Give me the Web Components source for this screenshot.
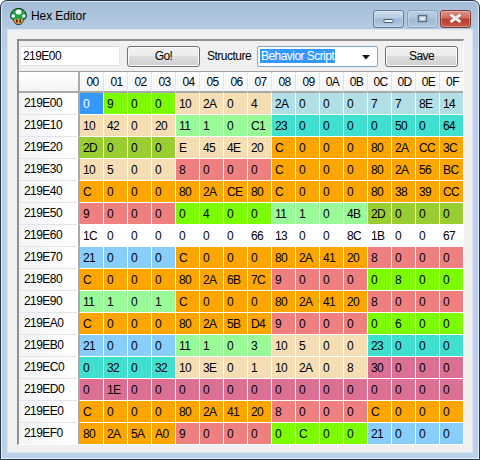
<!DOCTYPE html>
<html><head><meta charset="utf-8">
<style>
html,body{margin:0;padding:0;background:#fff;width:480px;height:460px;overflow:hidden}
body{font:12px "Liberation Sans",Arial,sans-serif;letter-spacing:-.55px;color:#000}
</style></head><body>
<hex-window><hex-panel><hex-toolbar></hex-toolbar><hex-grid></hex-grid></hex-panel></hex-window>
<template id="win-t"><style>
:host{display:flex;flex-direction:column;box-sizing:border-box;width:480px;height:460px;border:1px solid #2a3844;border-radius:7px 7px 0 0;background:linear-gradient(180deg,#a4bdd6 0,#b4cbe2 28px,#b9d1ea 60px);box-shadow:inset 0 0 0 1px rgba(255,255,255,.6);padding:0 7px 7px}
.title{height:29px;flex:none;display:flex;align-items:center}
.logo{margin:1px 4px 0 2px;flex:none}
.title span{font:12px "Liberation Sans",sans-serif;letter-spacing:-.1px;color:#000;margin-top:1px}
.caps{margin-left:auto;display:flex;gap:2px;align-self:flex-start;margin-top:9px;margin-right:1px}
.body{flex:1;background:#f0f0f0;padding:9px 8px 7px 9px;display:flex;min-height:0;box-shadow:0 0 0 1px #dce6f0}
</style>
<div class="title"><svg class="logo" width="17" height="17" viewBox="0 0 17 17"><path d="M8.5.5C4 .5.7 3.7.7 8c0 2.2 1.2 3.4 3 3.8.3 2.8 2 4.7 4.8 4.7s4.500-1.900 4.800-4.700c1.800-.4 3-1.600 3-3.800C16.300 3.700 13 .5 8.500.5Z" fill="#22a048" stroke="#0f2e18" stroke-width="1"/><ellipse cx="8.500" cy="4" rx="3" ry="2.500" fill="#f4fbf4"/><circle cx="3.200" cy="8" r="1.800" fill="#f4fbf4"/><circle cx="13.800" cy="8" r="1.800" fill="#f4fbf4"/><path d="M4 11.500c1.500-1 7.500-1 9 0 0 3-1.800 4.500-4.500 4.500S4 14.500 4 11.500Z" fill="#f0973a"/><rect x="6" y="11.500" width="1.500" height="3" fill="#2a1a08"/><rect x="9.500" y="11.500" width="1.500" height="3" fill="#2a1a08"/></svg><span>Hex Editor</span>
<div class="caps"><cap-btn kind="min"></cap-btn><cap-btn kind="max" style="margin-left:1px"></cap-btn><cap-btn kind="close"></cap-btn></div></div>
<div class="body"><slot></slot></div>
</template>
<script>
const byId=i=>document.getElementById(i);
class HexWindow extends HTMLElement{constructor(){super();this.attachShadow({mode:'open'}).appendChild(byId('win-t').content.cloneNode(true));}}
class CapBtn extends HTMLElement{constructor(){super();const k=this.getAttribute('kind');const s=this.attachShadow({mode:'open'});
const w=31;
const g=k==='min'?'<rect x="10" y="8.500" width="9" height="3" rx=".5" fill="#f4f7fa" stroke="#4a5c70"/>':k==='max'?'<rect x="10.500" y="4.500" width="8" height="6" fill="#cfdcea" stroke="#5a6c80" stroke-width="1.400"/><rect x="13" y="7" width="3" height="1.500" fill="#e8eef4"/>':'<path d="M9.500 3.500 L19.500 11 M19.500 3.500 L9.500 11" stroke="#5a2a26" stroke-width="4.200" opacity=".35"/><path d="M9.500 3.500 L19.500 11 M19.500 3.500 L9.500 11" stroke="#efe9e8" stroke-width="3"/>';
s.innerHTML=`<style>:host{display:block;width:${w}px;height:18px;box-sizing:border-box;border:1px solid ${k==='close'?'#7c3a36':k==='max'?'#8aa3bc':'#5f7a96'};border-radius:3px;background:${k==='close'?'linear-gradient(#dd9184 0,#cf6a5c 45%,#b93a2e 50%,#c65a4c 100%)':k==='max'?'linear-gradient(#bccfe2 0,#aec6de 45%,#a2bbd4 50%,#adc5dd 100%)':'linear-gradient(#d2e0ee 0,#b4cbe2 45%,#9cb8d4 50%,#b4cce3 100%)'};box-shadow:inset 0 0 0 1px rgba(255,255,255,.3)}svg{display:block}</style><svg width="29" height="16" viewBox="0 0 29 16">${g}</svg>`;}}
class HexPanel extends HTMLElement{constructor(){super();this.attachShadow({mode:'open'}).innerHTML=`<style>:host{display:flex;flex-direction:column;flex:none;box-sizing:border-box;border-left:2px solid #8f8f8f;border-top:2px solid #8f8f8f;border-right:1px solid #fff;border-bottom:1px solid #fff;background:#f0f0f0;width:447px;height:406px;overflow:hidden}</style><slot></slot>`;}}
class HexToolbar extends HTMLElement{constructor(){super();this.attachShadow({mode:'open'}).innerHTML=`<style>:host{display:flex;align-items:center;height:30px;box-sizing:border-box;padding:0 0 0 1px;flex:none;background:#f0f0f0}
.inp{width:100px;height:20px;box-sizing:border-box;background:#fff;border:1px solid #e4e5ea;border-top-color:#d8d9df;border-radius:2px;padding:0 2px;line-height:18px}
.lbl{margin:0 8px 0 7px;width:42px;white-space:nowrap;letter-spacing:-.5px}
.sel{width:121px;height:21px;box-sizing:border-box;background:#fff;border:1px solid #7fa9cf;border-radius:2px;display:flex;align-items:center;padding:0 2px;position:relative}
.sel b{font-weight:normal;background:#3399ff;color:#fff;padding:0 1px;line-height:14px;height:14px}
.sel svg{position:absolute;right:7px;top:8px}
.g{width:7px;flex:none}
</style><div class="inp">219E00</div><span class="g"></span><win-btn>Go!</win-btn><span class="lbl">Structure</span><div class="sel"><b>Behavior Script</b><svg width="8" height="5" viewBox="0 0 8 5"><path d="M0 0H8L4 4.500Z" fill="#111"/></svg></div><span class="g"></span><win-btn>Save</win-btn>`;}}
class WinBtn extends HTMLElement{constructor(){super();this.attachShadow({mode:'open'}).innerHTML=`<style>:host{display:flex;align-items:center;justify-content:center;width:73px;height:21px;flex:none;box-sizing:border-box;border:1px solid #707070;border-radius:3px;background:linear-gradient(#f2f2f2 0,#ebebeb 48%,#dddddd 50%,#cfcfcf 100%);box-shadow:inset 0 0 0 1px #fbfbfb}</style><slot></slot>`;}}
const C={s:'#3399ff',l:'#7cfc00',w:'#f5deb3',p:'#b0e0e6',g:'#98fb98',t:'#40e0d0',y:'#9acd32',c:'#f08080',o:'#ffa500',b:'#87cefa',v:'#db7093',n:'#ffffff'};
const rows=[
['219E00','s:0 l:9 l:0 l:0 w:10 w:2A w:0 w:4 p:2A p:0 p:0 p:0 p:7 p:7 p:8E p:14'],
['219E10','w:10 w:42 w:0 w:20 g:11 g:1 g:0 g:C1 t:23 t:0 t:0 t:0 t:0 t:50 t:0 t:64'],
['219E20','y:2D y:0 y:0 y:0 w:E w:45 w:4E w:20 o:C o:0 o:0 o:0 o:80 o:2A o:CC o:3C'],
['219E30','w:10 w:5 w:0 w:0 c:8 c:0 c:0 c:0 o:C o:0 o:0 o:0 o:80 o:2A o:56 o:BC'],
['219E40','o:C o:0 o:0 o:0 o:80 o:2A o:CE o:80 o:C o:0 o:0 o:0 o:80 o:38 o:39 o:CC'],
['219E50','c:9 c:0 c:0 c:0 l:0 l:4 l:0 l:0 g:11 g:1 g:0 g:4B y:2D y:0 y:0 y:0'],
['219E60','n:1C n:0 n:0 n:0 n:0 n:0 n:0 n:66 n:13 n:0 n:0 n:8C n:1B n:0 n:0 n:67'],
['219E70','b:21 b:0 b:0 b:0 o:C o:0 o:0 o:0 o:80 o:2A o:41 o:20 c:8 c:0 c:0 c:0'],
['219E80','o:C o:0 o:0 o:0 o:80 o:2A o:6B o:7C c:9 c:0 c:0 c:0 l:0 l:8 l:0 l:0'],
['219E90','g:11 g:1 g:0 g:1 o:C o:0 o:0 o:0 o:80 o:2A o:41 o:20 c:8 c:0 c:0 c:0'],
['219EA0','o:C o:0 o:0 o:0 o:80 o:2A o:5B o:D4 c:9 c:0 c:0 c:0 l:0 l:6 l:0 l:0'],
['219EB0','b:21 b:0 b:0 b:0 g:11 g:1 g:0 g:3 w:10 w:5 w:0 w:0 t:23 t:0 t:0 t:0'],
['219EC0','t:0 t:32 t:0 t:32 w:10 w:3E w:0 w:1 w:10 w:2A w:0 w:8 v:30 v:0 v:0 v:0'],
['219ED0','v:0 v:1E v:0 v:0 v:0 v:0 v:0 v:0 v:0 v:0 v:0 v:0 v:0 v:0 v:0 v:0'],
['219EE0','o:C o:0 o:0 o:0 o:80 o:2A o:41 o:20 c:8 c:0 c:0 c:0 o:C o:0 o:0 o:0'],
['219EF0','o:80 o:2A o:5A o:A0 c:9 c:0 c:0 c:0 l:0 l:C l:0 l:0 b:21 b:0 b:0 b:0']];
class HexGrid extends HTMLElement{constructor(){super();const s=this.attachShadow({mode:'open'});
const hdr='00 01 02 03 04 05 06 07 08 09 0A 0B 0C 0D 0E 0F'.split(' ');
let h=`<div class="corner"></div>`+hdr.map(x=>`<div class="ch">${x}</div>`).join('');
for(const [a,d] of rows){h+=`<div class="rh">${a}</div>`;for(const c of d.split(' ')){const [k,v]=c.split(':');h+=`<div class="c${k==='s'?' sel':''}" style="background:${C[k]}">${v}</div>`;}}
s.innerHTML=`<style>:host{display:grid;grid-template-columns:61px repeat(16,24px);grid-template-rows:21px repeat(16,22px);flex:none;background:#fff;border-top:1px solid #a0a0a0;width:445px}
div{box-sizing:border-box;white-space:nowrap;overflow:hidden}
.corner,.ch{background:linear-gradient(#fff,#f3f4f6);border-right:1px solid #e3e4e8;border-bottom:2px solid #a9a9a9}
.corner{border-right:2px solid #a9a9a9}
.ch{display:flex;align-items:center;justify-content:center;padding-left:2px}
.rh{background:linear-gradient(90deg,#f3f4f6,#fff);border-right:2px solid #a9a9a9;border-bottom:1px solid #e3e4e8;padding:0 0 2px 5px;display:flex;align-items:center}
.c{border-right:1px solid #fff;border-bottom:1px solid #fff;padding-left:3px;display:flex;align-items:center;color:#000}
.sel{color:#fff}
</style>`+h;}}
customElements.define('cap-btn',CapBtn);customElements.define('win-btn',WinBtn);customElements.define('hex-toolbar',HexToolbar);customElements.define('hex-grid',HexGrid);customElements.define('hex-panel',HexPanel);customElements.define('hex-window',HexWindow);
</script></body></html>
